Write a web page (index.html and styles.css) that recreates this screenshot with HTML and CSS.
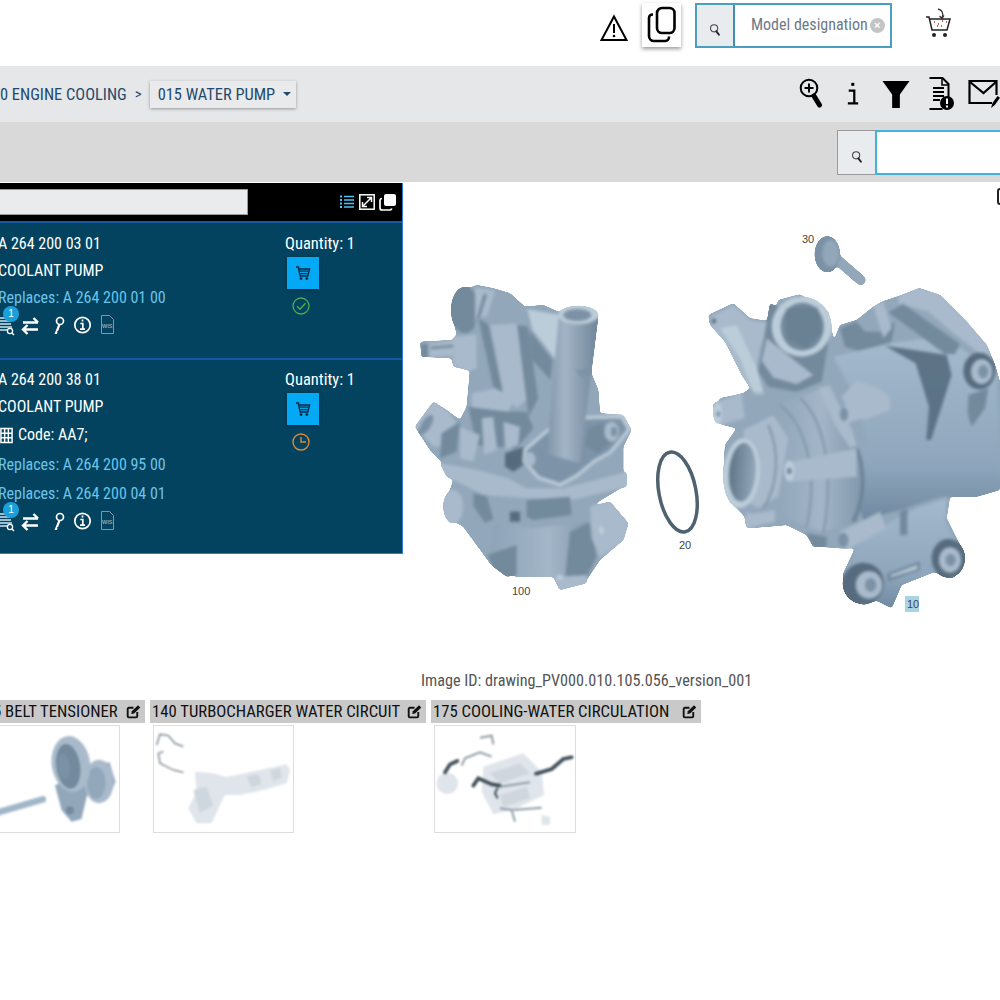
FILE: index.html
```html
<!DOCTYPE html>
<html lang="en">
<head>
<meta charset="utf-8">
<title>Water pump parts</title>
<link rel="stylesheet" href="styles.css">
</head>
<body>
<svg class="defs" width="0" height="0" aria-hidden="true">
  <defs>
    <filter id="soft" color-interpolation-filters="sRGB" x="-5%" y="-5%" width="110%" height="110%">
      <feGaussianBlur stdDeviation="4.500"/>
      <feComponentTransfer><feFuncA type="linear" slope="10" intercept="-4"/></feComponentTransfer>
    </filter>
    <filter id="blur" color-interpolation-filters="sRGB" x="-5%" y="-5%" width="110%" height="110%"><feGaussianBlur stdDeviation="2.500"/></filter>
    <linearGradient id="pipe" x1="0" x2="1" y1="0" y2="0"><stop offset="0" stop-color="#7f94a8"/><stop offset=".35" stop-color="#a3b5c6"/><stop offset="1" stop-color="#6f8599"/></linearGradient>
    <linearGradient id="barrel" x1="0" x2="0" y1="0" y2="1"><stop offset="0" stop-color="#a4b9cc"/><stop offset=".7" stop-color="#8ea6bc"/><stop offset="1" stop-color="#7089a0"/></linearGradient>
    <linearGradient id="low" x1="0" x2="1" y1="0" y2="0"><stop offset="0" stop-color="#8ea3b7"/><stop offset=".55" stop-color="#a3b6c8"/><stop offset="1" stop-color="#7f95a9"/></linearGradient>
    <linearGradient id="bore" x1="0" x2="1" y1="0" y2="0"><stop offset="0" stop-color="#5f7587"/><stop offset="1" stop-color="#93a8bb"/></linearGradient>
    <symbol id="mag" viewBox="0 0 14 16"><circle cx="6" cy="6" r="4.200" fill="none" stroke="#444" stroke-width="1.200"/><path d="M8.600 9.600l3 4" stroke="#222" stroke-width="2.200" stroke-linecap="round"/></symbol>
    <symbol id="tcart" viewBox="0 0 16 16"><path d="M1 2h2.400l.5 2h10.600l-1.700 7H5.200L3.400 2.600" fill="none" stroke="#0b2a44" stroke-width="1.500"/><path d="M5 6.200h8M5.500 8.600h6.600" stroke="#0b2a44" stroke-width="1.300"/><circle cx="6" cy="13.600" r="1.400" fill="#0b2a44"/><circle cx="11.800" cy="13.600" r="1.400" fill="#0b2a44"/></symbol>
    <symbol id="edit" viewBox="0 0 16 16"><path d="M12 8.500V13a1.200 1.200 0 0 1-1.200 1.200H3A1.200 1.200 0 0 1 1.800 13V5.200A1.200 1.200 0 0 1 3 4h5" fill="none" stroke="#111" stroke-width="2"/><path d="M5.600 10.600l.6-3 6.600-6.400 2.400 2.400-6.600 6.400z" fill="#111"/></symbol>
    <symbol id="rowicons" viewBox="0 0 120 24">
      <path d="M-1 5h10M-1 8h11M-1 11h12M-1 14h13M-1 17h12" stroke="#cfe6f2" stroke-width="1.500"/>
      <circle cx="10" cy="18" r="2.600" fill="#03435f" stroke="#fff" stroke-width="1.300"/><path d="M12 20l2 2" stroke="#fff" stroke-width="1.400"/>
      <path d="M23 9.500h15M33.500 5l4.500 4.500M23 16.500h15M27.500 12L23 16.500l4.500 4.500" fill="none" stroke="#fff" stroke-width="2.400"/>
      <circle cx="60" cy="8" r="3.500" fill="none" stroke="#fff" stroke-width="1.700"/><path d="M58.300 11.500l-3.800 9.500h2.400l.6-1.500-.6-1 1.400-.8.300-1 1.800-4.700z" fill="#fff"/>
      <circle cx="82.500" cy="12" r="7.700" fill="none" stroke="#fff" stroke-width="1.700"/><path d="M82.500 6.500v2M80.300 10.500h2.500v5.500M80 16.200h5" stroke="#fff" stroke-width="1.700" fill="none"/>
      <path d="M101.500 2.500h8l4 4v14h-12z" fill="none" stroke="#7f98a6" stroke-width="1"/><text x="102" y="14.500" class="wis">WIS</text>
    </symbol>
  </defs>
</svg>

<div class="page">
  <header class="top">
    <svg class="warn" viewBox="0 0 28 28"><path d="M14 2.500L26.500 26h-25z" fill="none" stroke="#000" stroke-width="2"/><path d="M14 10v9" stroke="#000" stroke-width="2"/><circle cx="14" cy="22" r="1.300"/></svg>
    <div class="copybox">
      <svg viewBox="0 0 30 38"><rect x="10" y="2" width="17.500" height="25" rx="5" fill="none" stroke="#000" stroke-width="2.600"/><path d="M6 8.500h-.5A3.500 3.500 0 0 0 2 12v18a5 5 0 0 0 5 5h11a4 4 0 0 0 4-4v-.5" fill="none" stroke="#000" stroke-width="2.600"/></svg>
    </div>
    <div class="model">
      <span class="prefix"><svg class="mag"><use href="#mag"/></svg></span>
      <span class="ph">Model designation</span>
      <span class="clear">×</span>
    </div>
    <svg class="basket" viewBox="0 0 28 32"><path d="M13 1c4 1 6 4 4 9m-2.500-2l2.500 2.500 2-3" fill="none" stroke="#333" stroke-width="1.300"/><path d="M1 9h3l3 13h15l3-11H5" fill="none" stroke="#222" stroke-width="1.500"/><path d="M9 14h1m3 2h1m3-3h1m3 1h1m-10 4h1m3 0h1" stroke="#a33" stroke-width="1.400"/><circle cx="9" cy="27" r="2" fill="#222"/><circle cx="20" cy="27" r="2" fill="#222"/></svg>
  </header>

  <nav class="crumbs">
    <span class="crumb">0 ENGINE COOLING</span><span class="sep">&gt;</span>
    <span class="drop">015 WATER PUMP<i class="caret"></i></span>
    <span class="tools">
      <svg class="t-zoom" viewBox="0 0 24 32"><circle cx="10" cy="10" r="8.300" fill="none" stroke="#000" stroke-width="2"/><path d="M10 5.500v9M5.500 10h9" stroke="#000" stroke-width="2"/><path d="M15 18l5.500 9" stroke="#000" stroke-width="5" stroke-linecap="round"/></svg>
      <svg class="t-i" viewBox="0 0 14 28"><rect x="5" y="1" width="3.500" height="3.500"/><path d="M2 10h6.500v14M1 25h12" fill="none" stroke="#000" stroke-width="2.600"/></svg>
      <svg class="t-filter" viewBox="0 0 28 28"><path d="M0 0h28L18 14v14H10V14z"/></svg>
      <svg class="t-doc" viewBox="0 0 26 34"><path d="M1.500 1h13l6 6v15m-6 10h-13z" fill="none" stroke="#000" stroke-width="2"/><path d="M14 1v7h7" fill="none" stroke="#000" stroke-width="1.500"/><path d="M5 11h11M5 15h11M5 19h11M5 23h7" stroke="#000" stroke-width="1.800"/><circle cx="19" cy="26" r="7"/><path d="M19 21.500v5.500M19 28.500v2" stroke="#fff" stroke-width="2"/></svg>
      <svg class="t-mail" viewBox="0 0 32 30"><path d="M24 24H1.500V2h27v14" fill="none" stroke="#000" stroke-width="2.200"/><path d="M2 3l13.500 11L28 3" fill="none" stroke="#000" stroke-width="2.200"/><path d="M23 29l1.500-5 5-7 2.500 1.800-5 7z"/></svg>
    </span>
  </nav>

  <div class="searchbar">
    <span class="prefix2"><svg class="mag"><use href="#mag"/></svg></span>
    <span class="input2"></span>
  </div>

  <main class="main">
    <section class="panel">
      <div class="panel-head">
        <span class="filter"></span>
        <span class="head-icons">
          <svg viewBox="0 0 16 16"><path d="M1 2.500h2M1 6h2M1 9.500h2M1 13h2" stroke="#4fc3f7" stroke-width="2"/><path d="M5 2.500h10M5 6h10M5 9.500h10M5 13h10" stroke="#4fc3f7" stroke-width="1.600"/></svg>
          <svg viewBox="0 0 16 16"><rect x=".8" y=".8" width="14.400" height="14.400" fill="none" stroke="#fff" stroke-width="1.500"/><path d="M4 12l8-8M8 3.500h4.500V8M3.500 8v4.500H8" fill="none" stroke="#fff" stroke-width="1.500"/></svg>
          <svg class="wide" viewBox="0 0 17 17"><rect x="5" y="0" width="12" height="12" rx="2" fill="#fff"/><path d="M3 4.500A2 2 0 0 0 1 6.500V14a2 2 0 0 0 2 2h8a2 2 0 0 0 1.800-1.500" fill="none" stroke="#fff" stroke-width="1.700"/></svg>
        </span>
      </div>

      <article class="row row-a">
        <div class="info">
          <div class="line">A 264 200 03 01</div>
          <div class="line">COOLANT PUMP</div>
          <div class="line blue">Replaces: A 264 200 01 00</div>
          <div class="iconline"><svg class="rowicons"><use href="#rowicons"/></svg><b class="badge">1</b></div>
        </div>
        <div class="order">
          <div class="qty">Quantity: 1</div>
          <span class="buy"><svg><use href="#tcart"/></svg></span>
          <svg class="state" viewBox="0 0 18 18"><circle cx="9" cy="9" r="8" fill="none" stroke="#4caf50" stroke-width="1.300"/><path d="M5 9.300l3 3 5.500-6" fill="none" stroke="#4caf50" stroke-width="1.300"/></svg>
        </div>
      </article>

      <article class="row row-b">
        <div class="info">
          <div class="line">A 264 200 38 01</div>
          <div class="line">COOLANT PUMP</div>
          <div class="line tall code"><svg class="grid" viewBox="0 0 14 17"><path d="M1 1h12v15H1zM1 6h12M1 11h12M5 1v15M9 1v15" fill="none" stroke="#fff" stroke-width="1.600"/></svg>Code: AA7;</div>
          <div class="line tall blue">Replaces: A 264 200 95 00</div>
          <div class="line blue">Replaces: A 264 200 04 01</div>
          <div class="iconline"><svg class="rowicons"><use href="#rowicons"/></svg><b class="badge">1</b></div>
        </div>
        <div class="order">
          <div class="qty">Quantity: 1</div>
          <span class="buy"><svg><use href="#tcart"/></svg></span>
          <svg class="state" viewBox="0 0 18 18"><circle cx="9" cy="9" r="8" fill="none" stroke="#d98a3c" stroke-width="1.400"/><path d="M9 4v5h5" fill="none" stroke="#d98a3c" stroke-width="1.400"/></svg>
        </div>
      </article>
    </section>

    <section class="drawing">
      <svg class="art" viewBox="403 182 597 484">
        <!-- left pump -->
        <g transform="translate(410 230) scale(.3333)" filter="url(#soft)">
          <path class="mid" d="M125 240L150 185 200 165 250 175 300 190 345 230 400 225 445 245 505 228 565 260 555 310 540 420 565 480 570 550 640 555 665 600 640 650 640 770 590 800 540 830 600 815 655 880 640 930 570 990 530 1050 450 1080 430 1040 320 1040 240 1000 160 890 110 860 100 820 120 780 130 750 90 690 60 660 15 590 70 515 110 540 150 570 170 530 180 420 130 410 125 385 35 380 30 335 130 330 140 315z"/>
          <ellipse class="dk" cx="165" cy="240" rx="42" ry="70"/>
          <path class="lt" d="M195 172l60 10-35 115-25-10z"/>
          <path class="dk" d="M222 190l9 4-28 90-7-6z"/>
          <path class="lt" d="M35 342l95-9v45l-95 2z"/>
          <path class="dk" d="M62 350l68-6v8l-68 6zM35 342l20 0v38h-20z"/>
          <path class="lt" d="M130 320l75-7 15 95-40 15-50-15z"/>
          <path class="mid" d="M200 265l150-30 10 270-160-20z"/>
          <path class="dk" d="M205 265l30 18 45 207-30-20z"/>
          <path class="lt" d="M240 285l80-5 30 230-30 25-40-40z"/>
          <path class="dk" d="M322 285l32 5 30 215-28 55z"/>
          <path class="xlt" d="M352 238l98 17-12 135-70-90z"/>
          <path class="dk" d="M358 300l70 90-6 60-55-60z"/>
          <path class="lt" d="M185 490l70-15 60 30-20 40-110 0z"/>
          <path class="dk" d="M175 530l115 15 60 0 20 50-50 60-120-10z"/>
          <path class="lt" d="M215 565l35-5 12 100-40 15zM280 575l50 15-5 55-40 15z"/>
          <path class="lt" d="M15 590l55-75 50 35 20 30-50 70-20 0z"/>
          <ellipse class="md2" cx="48" cy="585" rx="14" ry="34" transform="rotate(33 48 585)"/>
          <path class="dk" d="M95 610l55-35-10 90-50 20z"/>
          <path class="lt" d="M150 590l60 25-20 80-40-10z"/>
          <path class="ddk" d="M285 670l55-20 0 55-30 20-25-15z"/>
          <path class="bracket" d="M345 660l75-65 110-32 105-3 22 38-55 68-50 28-50 42-50 28-65-20-45-50z"/>
          <path class="dk" d="M535 595l40-15 30 55-40 35-40-25z"/>
          <ellipse class="lt" cx="605" cy="605" rx="22" ry="30"/>
          <ellipse class="md2" cx="612" cy="605" rx="9" ry="14"/>
          <ellipse class="lt" cx="360" cy="688" rx="17" ry="22"/>
          <path fill="url(#pipe)" d="M447 250l118 10-55 440-100-28z"/>
          <path class="dk" d="M495 418l40 0-18 30z" opacity=".5"/>
          <ellipse class="xlt" cx="505" cy="255" rx="60" ry="28"/>
          <ellipse class="md2" cx="502" cy="255" rx="42" ry="18"/>
          <path class="lt" d="M90 700l115 20 90 25 55 30 110 0 190-50 0 45-160 40-140-5-130-10-110-55z"/>
          <path class="dk" d="M190 790l40 8 20 70-25 10-35-50zM350 810l130-10 5 55-115 15-20-10z"/>
          <path class="ddk" d="M300 845l30 0 0 30-30 0z"/>
          <ellipse class="lt" cx="130" cy="830" rx="30" ry="50"/>
          <path fill="url(#low)" d="M250 880l120 15 170-20 20 80-30 85-210 0-80-40z"/>
          <path class="dk" d="M232 975l88-30 0 90-30 5-40-30zM480 905l55-25 25 100-30 60-65 5z"/>
          <path class="lt" d="M540 830l60-15 55 65-15 50-70 55-25-60z"/>
          <path class="xlt" d="M572 885l12 15-8 18-12-18z"/>
          <path class="lt" d="M430 1040l100-5 0 25-80 20z"/>
          <ellipse class="xlt" cx="450" cy="1042" rx="10" ry="8"/>
        </g>

        <ellipse class="ring" cx="677.500" cy="492" rx="18.500" ry="40.500" transform="rotate(-11 677.500 492)"/>

        <!-- right pump -->
        <g transform="translate(700 225) scale(.3333)" filter="url(#soft)">
          <path class="boltshaft" d="M395 90L482 165"/>
          <ellipse class="md2" cx="382" cy="88" rx="38" ry="54"/>
          <ellipse class="mid" cx="392" cy="85" rx="25" ry="40"/>
          <path class="mid" d="M25 270L100 235 150 280 215 290 235 225 300 208 385 260 400 340 385 390 420 300 470 285 520 245 545 230 590 215 660 190 720 210 800 290 860 360 885 420 900 470 900 790 830 810 750 815 740 880 795 990 760 1060 700 1040 660 1030 570 1080 550 1120 490 1140 430 1090 430 1045 465 970 420 970 360 965 340 965 320 930 260 900 150 910 130 870 90 830 70 740 75 660 110 610 70 600 40 570 60 520 130 505 150 490 110 400 70 330 30 300z"/>
          <path class="lt" d="M30 275l70-35 50 45 60 10-30 75-15 90 30 50-30 0-40-60-50-100-40-45z"/>
          <path class="xlt" d="M60 310l50-10 60 130 20 70-30 0-40-100z"/>
          <ellipse class="ddk" cx="42" cy="288" rx="6" ry="8"/>
          <path class="dk" d="M420 310l50-20 25 30 50 0 40-30-10 60-90 30-50-15z"/>
          <path fill="url(#barrel)" d="M400 395l170-40 150-20 170 100 10 360-70 20-110 0-120 40-110 30-20-60 30-190-40-130z"/>
          <path class="lt" d="M595 215l60-25 65 20 80 80 60 70 25 60-40-30-90-70-70-60-90-25z"/>
          <path class="dk" d="M565 262l45-25 170 120-15 30-30 0z"/>
          <path class="ddk" d="M555 362l185 28 15 60-62 195-14 0 8-100-40-130z" opacity=".9"/>
          <path class="dk" d="M805 510l60-20-10 60-40 55-12-40z"/>
          <path class="lt" d="M520 245l30-15 25 80-25 30z"/>
          <ellipse class="ddk" cx="838" cy="438" rx="48" ry="55"/>
          <ellipse class="lt" cx="845" cy="440" rx="32" ry="38"/>
          <ellipse class="md2" cx="850" cy="440" rx="15" ry="20"/>
          <path fill="url(#low)" d="M230 540l165-60 70 180 30 130-20 100-110 30-120-45-40-200z"/>
          <path class="arc" d="M240 540C320 600 355 750 320 905"/>
          <path class="arc" d="M300 520C380 590 400 760 370 925"/>
          <path class="arc dkarc" d="M470 670C500 740 490 830 460 890"/>
          <path class="lt" d="M355 490l30-10 70 130 15 50-20 10-45-70z"/>
          <path class="lt" d="M470 465l65 25 35 25 0 40-75 30-45-20-25-50z"/>
          <path class="lt" d="M430 545l50-15 10 50-50 15z"/>
          <ellipse class="md2" cx="432" cy="568" rx="12" ry="20"/>
          <path class="lt" d="M130 615l90-45 45 70-30 175-60 35-50-30 15-90z"/>
          <path class="arc" d="M205 600C240 680 235 780 190 850"/>
          <ellipse class="xlt" cx="125" cy="745" rx="55" ry="105" transform="rotate(4 125 745)"/>
          <ellipse fill="url(#bore)" cx="127" cy="742" rx="40" ry="88" transform="rotate(4 127 742)"/>
          <path class="lt" d="M255 715l215-45 0 85-200 15-15-25z"/>
          <ellipse class="xlt" cx="268" cy="738" rx="15" ry="32"/>
          <ellipse class="dk" cx="268" cy="738" rx="7" ry="10"/>
          <path class="lt" d="M40 535l85-30 10 75-70 20-25-30z"/>
          <ellipse class="xlt" cx="53" cy="565" rx="13" ry="32"/>
          <ellipse class="dk" cx="55" cy="567" rx="5" ry="8"/>
          <path class="lt" d="M135 870l90-15 0 35-85 20z"/>
          <ellipse class="lt" cx="147" cy="885" rx="12" ry="23"/>
          <path class="dk" d="M320 925l60 10 0 30-40 0z"/>
          <path class="dk" d="M175 440l35-205 180 85-25 150-75 30-85-15z"/>
          <path class="lt" d="M200 340l140 110-50 28-70-20-35-50z"/>
          <ellipse class="xlt" cx="305" cy="305" rx="90" ry="90" transform="rotate(25 305 305)"/>
          <ellipse class="dk" cx="307" cy="305" rx="65" ry="72"/>
          <path class="ddk" d="M255 250l100-5 10 80-45 45-60-30z" opacity=".3"/>
          <path fill="url(#barrel)" d="M470 960l110-75 70-35 90-30-5 70 50 100-80 50-100 40-30 70-60-30-60-100z"/>
          <path class="lt" d="M420 920l120-60 20 50-110 60-30 0z"/>
          <ellipse class="md2" cx="430" cy="945" rx="15" ry="22"/>
          <path class="dk" d="M600 860l22-10 0 80-22 0z"/>
          <path class="dk" d="M562 1045l98-36 0 26-98 36z"/>
          <path class="xlt" d="M572 1050l80-30 0 12-80 25z"/>
          <ellipse class="ddk" cx="490" cy="1075" rx="62" ry="62"/>
          <ellipse class="lt" cx="507" cy="1080" rx="40" ry="42"/>
          <ellipse class="md2" cx="512" cy="1080" rx="17" ry="20"/>
          <ellipse class="ddk" cx="745" cy="1000" rx="50" ry="58"/>
          <ellipse class="lt" cx="750" cy="1005" rx="33" ry="38"/>
          <ellipse class="md2" cx="752" cy="1005" rx="15" ry="18"/>
        </g>

        <rect class="hot" x="905" y="596" width="14" height="16"/>
        <text class="num" x="802" y="243">30</text>
        <text class="num" x="512" y="595">100</text>
        <text class="num" x="679" y="549">20</text>
        <text class="num" x="907" y="608">10</text>
      </svg>
      <i class="corner"></i>
      <p class="imgid">Image ID: drawing_PV000.010.105.056_version_001</p>
    </section>
  </main>

  <section class="thumbs">
    <figure class="thumb t1">
      <figcaption class="cap"><span class="cut">5 BELT TENSIONER</span><svg class="ed"><use href="#edit"/></svg></figcaption>
      <div class="pic">
        <svg viewBox="0 725 119 107">
          <g transform="translate(0 695) scale(.3333)" filter="url(#blur)">
            <path class="shaft" d="M-10 352L128 312"/>
            <path class="mid" d="M165 270L275 210 330 200 348 258 330 305 262 300 245 372 215 380 185 345z"/>
            <ellipse class="lt" cx="298" cy="258" rx="44" ry="66"/>
            <ellipse class="mid" cx="290" cy="262" rx="28" ry="48"/>
            <ellipse class="lt" cx="213" cy="205" rx="58" ry="85" transform="rotate(-8 213 205)"/>
            <ellipse class="dk" cx="205" cy="212" rx="36" ry="68" transform="rotate(-8 205 212)"/>
            <ellipse class="md2" cx="192" cy="212" rx="18" ry="40" transform="rotate(-8 192 212)"/>
            <circle class="dk" cx="210" cy="345" r="12"/>
          </g>
        </svg>
      </div>
    </figure>
    <figure class="thumb t2">
      <figcaption class="cap"><span>140 TURBOCHARGER WATER CIRCUIT</span><svg class="ed"><use href="#edit"/></svg></figcaption>
      <div class="pic">
        <svg viewBox="154 726 139 106">
          <g transform="translate(0 695) scale(.3333)" filter="url(#blur)">
            <path class="tube" d="M470 150L480 118 505 122 525 145 550 155"/>
            <path class="tube" d="M490 170L475 175 480 205 520 225 550 232"/>
            <path class="pale" d="M660 250L780 225 860 208 870 225 860 265 790 285 720 300 670 300z"/>
            <path class="pale" d="M585 230L640 235 690 250 680 290 660 330 635 385 590 385 565 340 590 290z"/>
            <path class="pale2" d="M580 285L620 275 640 330 600 355z"/>
            <path class="pale2" d="M740 245l35 -8 10 30 -30 10zM810 228l30 -10 5 30 -25 10z"/>
          </g>
        </svg>
      </div>
    </figure>
    <figure class="thumb t3">
      <figcaption class="cap"><span>175 COOLING-WATER CIRCULATION</span><svg class="ed"><use href="#edit"/></svg></figcaption>
      <div class="pic">
        <svg viewBox="435 726 140 106">
          <g transform="translate(420 695) scale(.3333)" filter="url(#blur)">
            <path class="pale" d="M190 215L310 175 365 230 372 300 280 345 220 358 185 290z"/>
            <path class="pale2" d="M210 235l90-30 30 30-90 30zM240 300l80-25 10 35-80 25z"/>
            <circle class="pale" cx="82" cy="265" r="32"/>
            <path class="pale" d="M365 360l25 5 0 25-25 0z"/>
            <path class="hose" d="M75 232L90 208 112 198"/>
            <path class="hose" d="M160 272L175 250 215 268 240 272"/>
            <path class="hose" d="M348 236L395 222 430 192 455 187"/>
            <path class="tube2" d="M240 275L330 262"/>
            <path class="tube2" d="M125 212L135 190 180 172 215 185"/>
            <path class="tube2" d="M180 128L215 122 220 148"/>
            <path class="tube2" d="M240 340L275 345 285 380M280 345L365 338"/>
            <path class="hose thin" d="M232 280L225 295 232 308"/>
          </g>
        </svg>
      </div>
    </figure>
  </section>
</div>
</body>
</html>
```

FILE: styles.css
```css
* { box-sizing: border-box; }
html, body { margin: 0; padding: 0; background: #fff; }
body { font-family: Roboto, "Liberation Sans", sans-serif; font-stretch: 75%; overflow: hidden; }
.defs { position: absolute; }
.page { width: 1000px; height: 1000px; overflow: hidden; }

.top { height: 66px; display: flex; align-items: flex-start; padding: 3px 0 0 600px; }
.warn { width: 28px; height: 28px; margin: 11px 14px 0 0; flex: none; }
.copybox { width: 39px; height: 44px; background: #fff; box-shadow: 0 2px 4px rgba(0,0,0,.4); display: flex; align-items: center; justify-content: center; margin-right: 14px; flex: none; }
.copybox svg { width: 30px; height: 38px; }
.model { width: 197px; height: 45px; border: 2px solid #4a9fc0; display: flex; align-items: center; flex: none; }
.prefix { width: 38px; flex: none; height: 100%; background: #e9ecef; border-right: 2px solid #3f8fb0; display: flex; align-items: center; justify-content: center; padding-top: 8px; }
.mag { width: 12px; height: 14px; }
.ph { margin-left: 16px; color: #6c7a87; font-size: 16px; white-space: nowrap; padding-bottom: 3px; }
.clear { width: 15px; height: 15px; flex: none; border-radius: 50%; background: #c4c4c4; color: #fff; font: 700 11px/15px "Liberation Sans", sans-serif; text-align: center; margin-left: 2px; }
.basket { width: 28px; height: 32px; margin: 5px 0 0 33px; flex: none; }

.crumbs { height: 56px; background: #e6e7e8; display: flex; align-items: center; color: #1f4a6e; font-size: 16.400px; }
.crumb { white-space: nowrap; }
.sep { margin: 0 8px; font-size: 15px; }
.drop { width: 146px; height: 27px; background: #e9eaeb; box-shadow: 0 1px 3px rgba(0,0,0,.35); display: flex; align-items: center; padding-left: 8px; white-space: nowrap; }
.caret { width: 0; height: 0; border: 4px solid transparent; border-top: 4px solid #1f4a6e; border-bottom: 0; margin-left: 8px; }
.tools { margin-left: auto; display: flex; align-items: center; }
.t-zoom { width: 24px; height: 32px; margin-right: 23px; flex: none; }
.t-i { width: 14px; height: 24px; margin-right: 22px; flex: none; }
.t-filter { width: 28px; height: 27px; margin-right: 18px; flex: none; }
.t-doc { width: 26px; height: 34px; margin-right: 14px; flex: none; }
.t-mail { width: 32px; height: 30px; flex: none; }

.searchbar { height: 60px; background: #d9d9d9; display: flex; justify-content: flex-end; padding-top: 8px; }
.prefix2 { width: 38px; height: 45px; background: #e9ecef; border: 1px solid #9a9a9a; border-right: 0; display: flex; align-items: center; justify-content: center; padding-top: 8px; }
.input2 { width: 125px; height: 45px; background: #fff; border: 2px solid #3fb2e0; border-right: 0; }

.main { display: flex; height: 515px; }
.panel { width: 403px; height: 371px; background: #03435f; border: solid #2f7fd0; border-width: 0 1px 1px 0; margin-top: 1px; flex: none; }
.panel-head { height: 38px; background: #000; display: flex; align-items: center; justify-content: space-between; padding-right: 6px; }
.filter { width: 248px; height: 26px; background: #e9ebed; border: 1px solid #999; border-left: 0; }
.head-icons { display: flex; gap: 4px; align-items: center; }
.head-icons svg { width: 16px; height: 16px; }
.head-icons .wide { width: 17px; height: 17px; }
.row { display: flex; color: #fff; font-size: 16px; border-top: 2px solid #1358a5; }
.row-a { height: 137px; padding-top: 7px; }
.row-b { height: 195px; padding-top: 6px; }
.info { width: 285px; margin-left: -2px; flex: none; }
.line { height: 27px; line-height: 27px; white-space: nowrap; }
.tall { height: 30px; line-height: 30px; }
.blue { color: #6cc4ea; }
.code { display: flex; align-items: center; margin-left: 2px; }
.grid { width: 13px; height: 17px; margin-right: 5px; flex: none; }
.iconline { position: relative; height: 28px; padding: 2px 0 0 2px; }
.rowicons { width: 120px; height: 24px; display: block; overflow: visible; }
.wis { font: 700 5.500px "Liberation Sans", sans-serif; fill: #8aa4b2; }
.badge { position: absolute; left: 5px; top: -5px; width: 16px; height: 16px; border-radius: 50%; background: #1ba0dc; color: #fff; font: 400 10px/16px "Liberation Sans", sans-serif; text-align: center; }
.order { margin-left: 2px; }
.qty { height: 27px; line-height: 27px; white-space: nowrap; font-size: 16.500px; }
.buy { display: flex; width: 32px; height: 32px; margin-left: 2px; background: #03a9f4; box-shadow: 0 1px 3px rgba(0,0,0,.4); align-items: center; justify-content: center; }
.buy svg { width: 16px; height: 16px; }
.state { display: block; width: 18px; height: 18px; margin: 8px 0 0 7px; }

.drawing { position: relative; flex: 1; min-width: 0; }
.art { display: block; width: 597px; height: 484px; }
.corner { position: absolute; right: -4px; top: 6px; width: 7px; height: 17px; border: 2px solid #222; border-radius: 3px; }
.imgid { margin: 0; position: absolute; top: 489px; left: 18px; color: #555; font-size: 16.200px; white-space: nowrap; }
.mid { fill: #92a7ba; }
.md2 { fill: #7b91a5; }
.lt { fill: #a8bacb; }
.xlt { fill: #bccdda; }
.dk { fill: #73899c; }
.ddk { fill: #566c7e; }
.bracket { fill: #7d93a7; stroke: #b9c9d7; stroke-width: 11; stroke-linejoin: round; }
.boltshaft { fill: none; stroke: #92a7ba; stroke-width: 30; stroke-linecap: round; }
.arc { fill: none; stroke: #7f95a9; stroke-width: 6; }
.dkarc { stroke: #6b8195; stroke-width: 10; }
.ring { fill: none; stroke: #4f626f; stroke-width: 3.500; }
.hot { fill: #a8d4e6; }
.num { font: 11px "Liberation Sans", sans-serif; fill: #444; }

.thumbs { display: flex; gap: 5px; margin-top: 3px; }
.thumb { margin: 0; flex: none; }
.cap { height: 23px; background: #c9c9c9; color: #111; font-size: 16.700px; line-height: 23px; display: flex; align-items: center; justify-content: space-between; padding: 0 4px 0 2px; white-space: nowrap; }
.ed { width: 15px; height: 15px; flex: none; }
.pic { height: 108px; margin: 2px 0 0 3px; border: 1px solid #ddd; }
.pic svg { display: block; width: 100%; height: 100%; }
.t1 { width: 145px; }
.t1 .cut { margin-left: -9px; }
.t1 .pic { width: 120px; margin-left: 0; border-left: 0; }
.t2 { width: 276px; }
.t2 .pic { width: 141px; }
.t3 { width: 270px; }
.t3 .pic { width: 142px; }
.shaft { fill: none; stroke: #a1b6c9; stroke-width: 20; stroke-linecap: round; }
.tube { fill: none; stroke: #6f7d88; stroke-width: 4; }
.tube2 { fill: none; stroke: #8f9ca6; stroke-width: 6; }
.pale { fill: #dfe5ea; }
.pale2 { fill: #cfd7de; }
.hose { fill: none; stroke: #3f4e59; stroke-width: 11; stroke-linecap: round; }
.thin { stroke-width: 6; }
```
